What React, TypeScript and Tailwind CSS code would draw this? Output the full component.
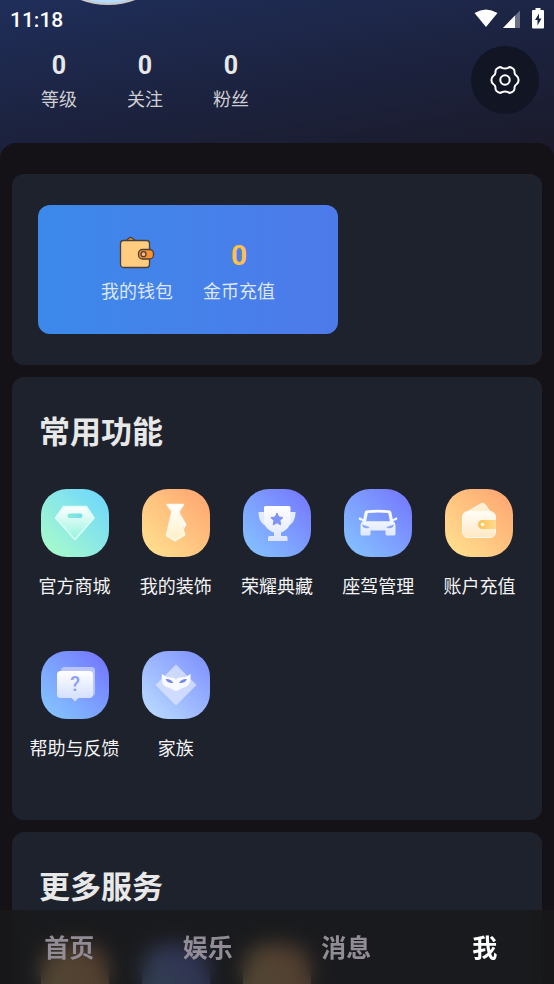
import React from "react";

const font =
  "font-[Roboto,'Noto_Sans_CJK_SC',sans-serif]";

type TileTone = "mint" | "orange" | "indigo" | "blue" | "pale";

const tones: Record<TileTone, string> = {
  mint: "bg-linear-to-tr from-[#adfdc4] to-[#6bd4ff]",
  orange: "bg-linear-to-tr from-[#ffe491] to-[#ffa26f]",
  indigo: "bg-linear-to-tr from-[#86c6ff] to-[#7572ff]",
  blue: "bg-linear-to-tr from-[#86caff] to-[#7370ff]",
  pale: "bg-linear-to-tr from-[#bedfff] to-[#7d8cff]",
};

function Glyph({ children }: { children: React.ReactNode }) {
  return (
    <svg viewBox="0 0 68 68" className="size-full" aria-hidden="true">
      {children}
    </svg>
  );
}

function Fade({ id, from, to }: { id: string; from: string; to: string }) {
  return (
    <linearGradient id={id} x1="0" y1="0" x2="0" y2="1">
      <stop offset="0" stopColor={from} />
      <stop offset="1" stopColor={to} />
    </linearGradient>
  );
}

const Gem = () => (
  <Glyph>
    <defs>
      <Fade id="gem" from="#ffffff" to="#94f3df" />
      <linearGradient id="slot">
        <stop offset="0" stopColor="#8aebd0" />
        <stop offset="1" stopColor="#74dcf0" />
      </linearGradient>
    </defs>
    <path d="M22.5 17.5h23l7.500 11.500-19 21.500-19.500-21.500z" fill="url(#gem)" stroke="#d9fff7" strokeWidth="1.500" strokeLinejoin="round" />
    <rect x="26.500" y="24.500" width="15" height="4.500" rx="2.250" fill="url(#slot)" />
  </Glyph>
);

const Tie = () => (
  <Glyph>
    <defs><Fade id="tie" from="#ffffff" to="#fff0c4" /></defs>
    <path d="M25 15.500h16.500l-4.500 7 5.500 23.500-9.500 5.500-8.500-5 5.500-24z" fill="url(#tie)" stroke="#fffaf0" strokeWidth="1.500" strokeLinejoin="round" />
    <path d="M38 24.500l6.500 11-2.500 4.500z" fill="#fffdf8" />
  </Glyph>
);

const Trophy = () => (
  <Glyph>
    <defs><Fade id="cup" from="#ffffff" to="#dfe6ff" /></defs>
    <path d="M21 23h-5.500c0 7 2.500 12 8.500 14.500h20c6-2.500 8.500-7.500 8.500-14.500h-5.500" fill="#e3ebff" />
    <path d="M21 18.500q0-1.500 1.500-1.500h23.500q1.500 0 1.500 1.500v12c0 7-4 11-9.500 13v3.500h5q1.500 0 1.500 1.500v3.500h-19.500v-3.500q0-1.500 1.500-1.500h4.500v-3.500c-6-2-10-6-10-13z" fill="url(#cup)" />
    <path d="M34 24l1.800 4 4.200.5-3.100 3 .8 4.400-3.700-2.100-3.900 2.100.8-4.400-3.100-3 4.300-.5z" fill="#7e93f8" stroke="#7e93f8" strokeWidth="1" strokeLinejoin="round" />
  </Glyph>
);

const Car = () => (
  <Glyph>
    <defs><Fade id="car" from="#ffffff" to="#dfe9ff" /></defs>
    <path
      fillRule="evenodd"
      d="M22.500 21.500q11.500-1.500 23 0q1.500.2 1.800 1.700l1.500 7 3-1.600q1.700-.3 1.500 1.300l-.8 1.100-3.300 1q2.300 1.500 2.300 4.500v8.500q0 1.500-1.500 1.500h-7q-1.500 0-1.500-1.500v-3.500h-15v3.500q0 1.500-1.500 1.500h-7q-1.500 0-1.500-1.500v-8.500q0-3 2.300-4.500l-3.300-1-.8-1.100q-.2-1.600 1.500-1.300l3 1.600 1.500-7q.3-1.500 1.800-1.700zm1.300 2.500l-1.700 8.200h23.800l-1.700-8.200q-10-1-20.400 0z"
      fill="url(#car)"
    />
    <path d="M18 35.500l7.500 2.500q-.5 1.500-3 1.200-3.800-.2-4.500-3.700zM50 35.500l-7.500 2.500q.5 1.500 3 1.200 3.800-.2 4.500-3.700z" fill="#8ba6fb" />
  </Glyph>
);

const Purse = () => (
  <Glyph>
    <defs>
      <Fade id="purse" from="#fffdf6" to="#ffe8c2" />
      <linearGradient id="clasp">
        <stop offset="0" stopColor="#ffbe4e" />
        <stop offset="1" stopColor="#ffdb93" />
      </linearGradient>
    </defs>
    <path d="M18.500 25l18-10.500q2-.8 3.500 1l6.500 9z" fill="#fff0d4" stroke="#fffaf0" strokeWidth="1" />
    <rect x="17.500" y="22.500" width="33" height="26" rx="5.500" fill="url(#purse)" stroke="#fffaf0" />
    <path d="M51 31v9h-13.500a4.500 4.500 0 0 1 0-9z" fill="url(#clasp)" />
    <circle cx="37.500" cy="35.500" r="1.700" fill="#fff" />
  </Glyph>
);

const Help = () => (
  <Glyph>
    <defs><Fade id="bubble" from="#ffffff" to="#cfdcff" /></defs>
    <rect x="20" y="16" width="34" height="29" rx="3.500" fill="#b9c4ff" />
    <path d="M19.500 20h29q3.500 0 3.500 3.500v20q0 3.500-3.500 3.500h-11l-3.500 3.500-3.500-3.500h-11q-3.500 0-3.500-3.500v-20q0-3.500 3.500-3.500z" fill="url(#bubble)" />
    <text x="34" y="40" textAnchor="middle" fontSize="20" fontWeight="500" fill="#8b9ffb" fontFamily="Roboto">?</text>
  </Glyph>
);

const Mask = () => (
  <Glyph>
    <defs><Fade id="mask" from="#ffffff" to="#f4f6ff" /></defs>
    <path d="M34 13.500l20.500 20.500-20.500 20.500-20.500-20.500z" fill="#dfe6ff" fillOpacity=".75" />
    <path d="M20 23q4 3.500 9 3.500 4 .3 5 2.500 1-2.200 5-2.500 5 0 9.500-3.500.5 8-2 11-2.500 2.500-6 3l-6.500 3.500-6.500-3.500q-3.500-.5-6-3-2.500-3-1.500-11z" fill="url(#mask)" />
    <path d="M23.500 28q5.500-.3 8 4-6 .8-8-4zM45 28q-5.500-.3-8 4 6 .8 8-4z" fill="#7189f0" />
  </Glyph>
);

function Tile({ tone, icon, label }: { tone: TileTone; icon: React.ReactNode; label: string }) {
  return (
    <button type="button" className="flex flex-col items-center gap-[18px]">
      <span className={`block size-[68px] overflow-hidden rounded-[26px] ${tones[tone]}`}>{icon}</span>
      <span className="text-[18px] leading-6 whitespace-nowrap text-[#f4f4f5]">{label}</span>
    </button>
  );
}

function Section({ title, children }: { title: string; children: React.ReactNode }) {
  return (
    <section className="rounded-xl bg-[#1e222d] px-3 pt-9 pb-[59px]">
      <h2 className="px-[15px] text-[31px] leading-10 font-bold text-[#e8e8e8]">{title}</h2>
      <div className="mt-9 grid grid-cols-5 gap-y-[52px]">{children}</div>
    </section>
  );
}

function StatusBar() {
  return (
    <div className="flex h-[38px] items-center justify-between pr-[9px] pl-[10px] text-white">
      <time className="relative pt-[2px] text-[21px] leading-6 font-medium">11:18</time>
      <svg viewBox="0 0 72 22" className="h-[22px] w-[72px]" aria-label="Wi-Fi, 信号, 电池">
        <path d="M1.500 5q11.500-7 23 0l-11.500 14z" fill="#fff" />
        <path d="M47 2.500v17.500h-17z" fill="#fff" fillOpacity=".35" />
        <path d="M42 7.500v12.500h-12z" fill="#fff" />
        <path fillRule="evenodd" d="M62.500 0h5v2h2.500q1 0 1 1v16.500q0 1-1 1h-10q-1 0-1-1v-16.500q0-1 1-1h2.500zm3.500 5.500l-4 6.500h2.500v5.500l4-7h-2.500z" fill="#fff" />
      </svg>
    </div>
  );
}

const stats = [
  ["0", "等级"],
  ["0", "关注"],
  ["0", "粉丝"],
];

const tabs = ["首页", "娱乐", "消息", "我"];

export default function App() {
  return (
    <div className={`relative h-screen overflow-hidden bg-[#141117] ${font}`}>
      <header className="relative h-[159px] overflow-hidden bg-linear-170 from-[#1f2e5a] via-[#1c2340] via-50% to-[#1a1928]">
        <div className="absolute -top-[143px] left-[34px] size-[148px] rounded-full border-2 border-[#c9c9c6] bg-[#b5dbff]" />
        <StatusBar />
        <div className="flex items-start justify-between pt-2 pr-[15px] pl-4">
          <dl className="flex pt-[5px]">
            {stats.map(([value, label]) => (
              <div key={label} className="flex w-[86px] flex-col-reverse items-center gap-[7px]">
                <dt className="text-[18px] leading-6 text-[#cfcfd2]">{label}</dt>
                <dd className="text-[25px] leading-[30px] font-bold text-[#e8e8e8]">{value}</dd>
              </div>
            ))}
          </dl>
          <button type="button" aria-label="设置" className="grid size-[68px] place-items-center rounded-full bg-[#121524]">
            <svg viewBox="-16 -16 32 32" className="size-8" fill="none" stroke="#fff" strokeWidth="2" strokeLinejoin="round">
              <path d="M-6.500-12.300Q-5-13.500-3-12.200Q0-10.800 3-12.200Q5-13.500 6.500-12.300L8.500-11Q9.700-10 9.500-7.500Q9.500-5.500 11.800-4Q13.600-2.500 13.600 0Q13.600 2.500 11.800 4Q9.500 5.500 9.500 7.500Q9.700 10 8.500 11L6.500 12.300Q5 13.500 3 12.200Q0 10.800-3 12.200Q-5 13.500-6.500 12.300L-8.500 11Q-9.700 10-9.500 7.500Q-9.500 5.500-11.800 4Q-13.600 2.500-13.600 0Q-13.600-2.500-11.800-4Q-9.500-5.500-9.500-7.500Q-9.700-10-8.500-11Z" />
              <circle r="4.700" />
            </svg>
          </button>
        </div>
      </header>

      <main className="relative -mt-4 flex flex-col gap-3 rounded-t-2xl bg-[#141117] px-3 pt-[31px]">
        <section className="rounded-xl bg-[#1e222d] px-[26px] py-[31px]">
          <div className="flex h-[129px] max-w-[300px] items-start justify-center gap-[30px] rounded-xl bg-linear-to-r from-[#3b89ea] to-[#4d7aea] pt-[31px]">
            <button type="button" className="flex flex-col items-center gap-2">
              <svg viewBox="0 0 36 36" className="size-9" stroke="#4a4038" strokeWidth="1.300" aria-hidden="true">
                <path d="M7 5l3-3q1.500-1 3 0l4 3z" fill="#ff9838" />
                <rect x="1.500" y="4.500" width="29" height="27" rx="3" fill="#ffcc80" />
                <rect x="19.500" y="13.500" width="15" height="9.500" rx="4" fill="#fb9333" />
                <circle cx="24.500" cy="18.200" r="2.500" fill="#ffb780" />
              </svg>
              <span className="text-[18px] leading-6 text-[#dfe7f5]">我的钱包</span>
            </button>
            <button type="button" className="flex flex-col items-center gap-2">
              <span className="pt-1 text-[28px] leading-8 font-bold text-[#ffc04d]">0</span>
              <span className="text-[18px] leading-6 text-[#dfe7f5]">金币充值</span>
            </button>
          </div>
        </section>

        <Section title="常用功能">
          <Tile tone="mint" icon={<Gem />} label="官方商城" />
          <Tile tone="orange" icon={<Tie />} label="我的装饰" />
          <Tile tone="indigo" icon={<Trophy />} label="荣耀典藏" />
          <Tile tone="indigo" icon={<Car />} label="座驾管理" />
          <Tile tone="orange" icon={<Purse />} label="账户充值" />
          <Tile tone="blue" icon={<Help />} label="帮助与反馈" />
          <Tile tone="pale" icon={<Mask />} label="家族" />
        </Section>

        <Section title="更多服务">
          <span className="mx-auto size-[68px] rounded-[26px] bg-linear-to-tr from-[#ffe491] to-[#ffa26f]" />
          <span className="mx-auto size-[68px] rounded-[26px] bg-linear-to-tr from-[#86c6ff] to-[#7572ff]" />
          <span className="mx-auto size-[68px] rounded-[26px] bg-linear-to-tr from-[#ffe491] to-[#ffa26f]" />
        </Section>
      </main>

      <nav className="fixed inset-x-0 bottom-0 grid h-[74px] grid-cols-4 bg-[#181818]/75 pt-[3px] backdrop-blur-[10px]">
        {tabs.map((tab) => (
          <a
            key={tab}
            href="#"
            aria-current={tab === "我" ? "page" : undefined}
            className="grid place-items-center text-[25px] leading-8 font-bold text-[#918c96] aria-[current=page]:text-white"
          >
            {tab}
          </a>
        ))}
      </nav>
    </div>
  );
}
